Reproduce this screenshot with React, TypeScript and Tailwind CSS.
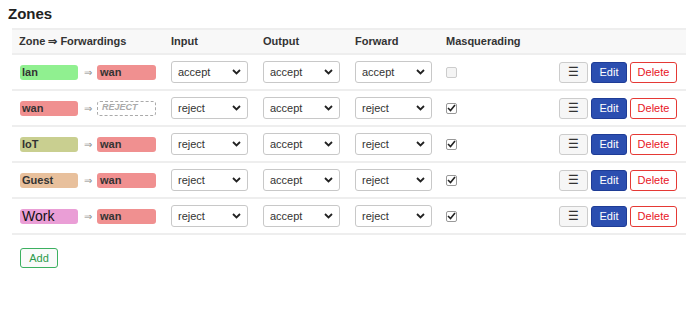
import React from 'react';

type Zone = {
    name: string;
    color: string;
    fwd: string | null;
    input: string;
    output: string;
    forward: string;
    masq: boolean;
    big?: boolean;
};

const zones: Zone[] = [
    { name: 'lan', color: 'bg-[#90f090]', fwd: 'wan', input: 'accept', output: 'accept', forward: 'accept', masq: false },
    { name: 'wan', color: 'bg-[#f09090]', fwd: null, input: 'reject', output: 'accept', forward: 'reject', masq: true },
    { name: 'IoT', color: 'bg-[#c9cf90]', fwd: 'wan', input: 'reject', output: 'accept', forward: 'reject', masq: true },
    { name: 'Guest', color: 'bg-[#e8c09c]', fwd: 'wan', input: 'reject', output: 'accept', forward: 'reject', masq: true },
    { name: 'Work', color: 'bg-[#ea9ed6]', fwd: 'wan', input: 'reject', output: 'accept', forward: 'reject', masq: true, big: true },
];

const Chevron: React.FC = () => (
    <svg width="9" height="6" viewBox="0 0 9 6" fill="none">
        <path d="M1 1L4.5 4.5L8 1" stroke="#222" strokeWidth="1.8" />
    </svg>
);

const Select: React.FC<{ value: string }> = ({ value }) => (
    <div className="flex h-[22px] w-[77px] items-center justify-between rounded-[3px] border border-[#c8c8c8] bg-white pl-[6px] pr-[6px] text-[11px] text-[#333]">
        <span>{value}</span>
        <Chevron />
    </div>
);

const Check: React.FC<{ on: boolean }> = ({ on }) => (
    <div className={`flex h-[11px] w-[11px] items-center justify-center rounded-[2px] border ${on ? 'border-[#999]' : 'border-[#ccc] bg-[#f4f4f4]'}`}>
        {on && (
            <svg width="9" height="8" viewBox="0 0 9 8" fill="none">
                <path d="M1 4L3.5 6.5L8 1" stroke="#222" strokeWidth="1.6" />
            </svg>
        )}
    </div>
);

const App: React.FC = () => {
    return (
        <div className="h-[309px] w-[690px] bg-white pl-[8px] pt-[5px] font-['Liberation_Sans',Arial,sans-serif] text-[#404040]">
            <h2 className="mb-[5px] text-[15px] leading-[18px] font-bold text-[#222]">Zones</h2>
            <div className="ml-[4px] w-[674px]">
                <div className="flex h-[27px] items-center border-y-2 border-[#eee] bg-[#f8f8f8] text-[11px] font-bold text-[#333]">
                    <div className="w-[152px] pl-[7px]">Zone ⇒ Forwardings</div>
                    <div className="w-[92px] pl-[7px]">Input</div>
                    <div className="w-[92px] pl-[7px]">Output</div>
                    <div className="w-[91px] pl-[7px]">Forward</div>
                    <div className="pl-[7px]">Masquerading</div>
                </div>
                {zones.map((z) => (
                    <div key={z.name} className="flex h-[36px] items-center border-b-2 border-[#eee] text-[11px]">
                        <div className="flex w-[152px] items-center pl-[8px]">
                            <span className={`flex h-[15px] w-[58px] items-center rounded-[3px] pl-[2px] ${z.color} ${z.big ? 'text-[14px] font-normal text-[#111]' : 'font-bold text-[#333]'}`}>
                                {z.name}
                            </span>
                            <span className="w-[19px] text-center text-[10px] text-[#888]">⇒</span>
                            {z.fwd ? (
                                <span className="flex h-[15px] w-[59px] items-center rounded-[3px] bg-[#f09090] pl-[3px] font-bold text-[#333]">{z.fwd}</span>
                            ) : (
                                <span className="flex h-[15px] w-[59px] items-center rounded-[3px] border border-dashed border-[#aaa] pl-[4px] text-[9px] font-bold italic text-[#aaa]">REJECT</span>
                            )}
                        </div>
                        <div className="w-[92px] pl-[7px]"><Select value={z.input} /></div>
                        <div className="w-[92px] pl-[7px]"><Select value={z.output} /></div>
                        <div className="w-[91px] pl-[7px]"><Select value={z.forward} /></div>
                        <div className="w-[120px] pl-[7px]"><Check on={z.masq} /></div>
                        <div className="flex items-center gap-[3px]">
                            <button className="flex h-[21px] w-[29px] items-center justify-center rounded-[3px] border border-[#ccc] bg-[#f6f6f6] text-[12px] text-[#333]">☰</button>
                            <button className="flex h-[21px] w-[36px] items-center justify-center rounded-[3px] border border-[#1e3c96] bg-[#2b4eb0] text-[11px] text-white">Edit</button>
                            <button className="flex h-[21px] w-[47px] items-center justify-center rounded-[3px] border border-[#e53935] bg-white text-[11px] text-[#e8141e]">Delete</button>
                        </div>
                    </div>
                ))}
                <div className="pl-[8px] pt-[13px]">
                    <button className="flex h-[20px] w-[38px] items-center justify-center rounded-[3px] border border-[#3cb060] bg-[#fafafa] text-[11px] text-[#2a9a4a]">Add</button>
                </div>
            </div>
        </div>
    );
};

export default App;
